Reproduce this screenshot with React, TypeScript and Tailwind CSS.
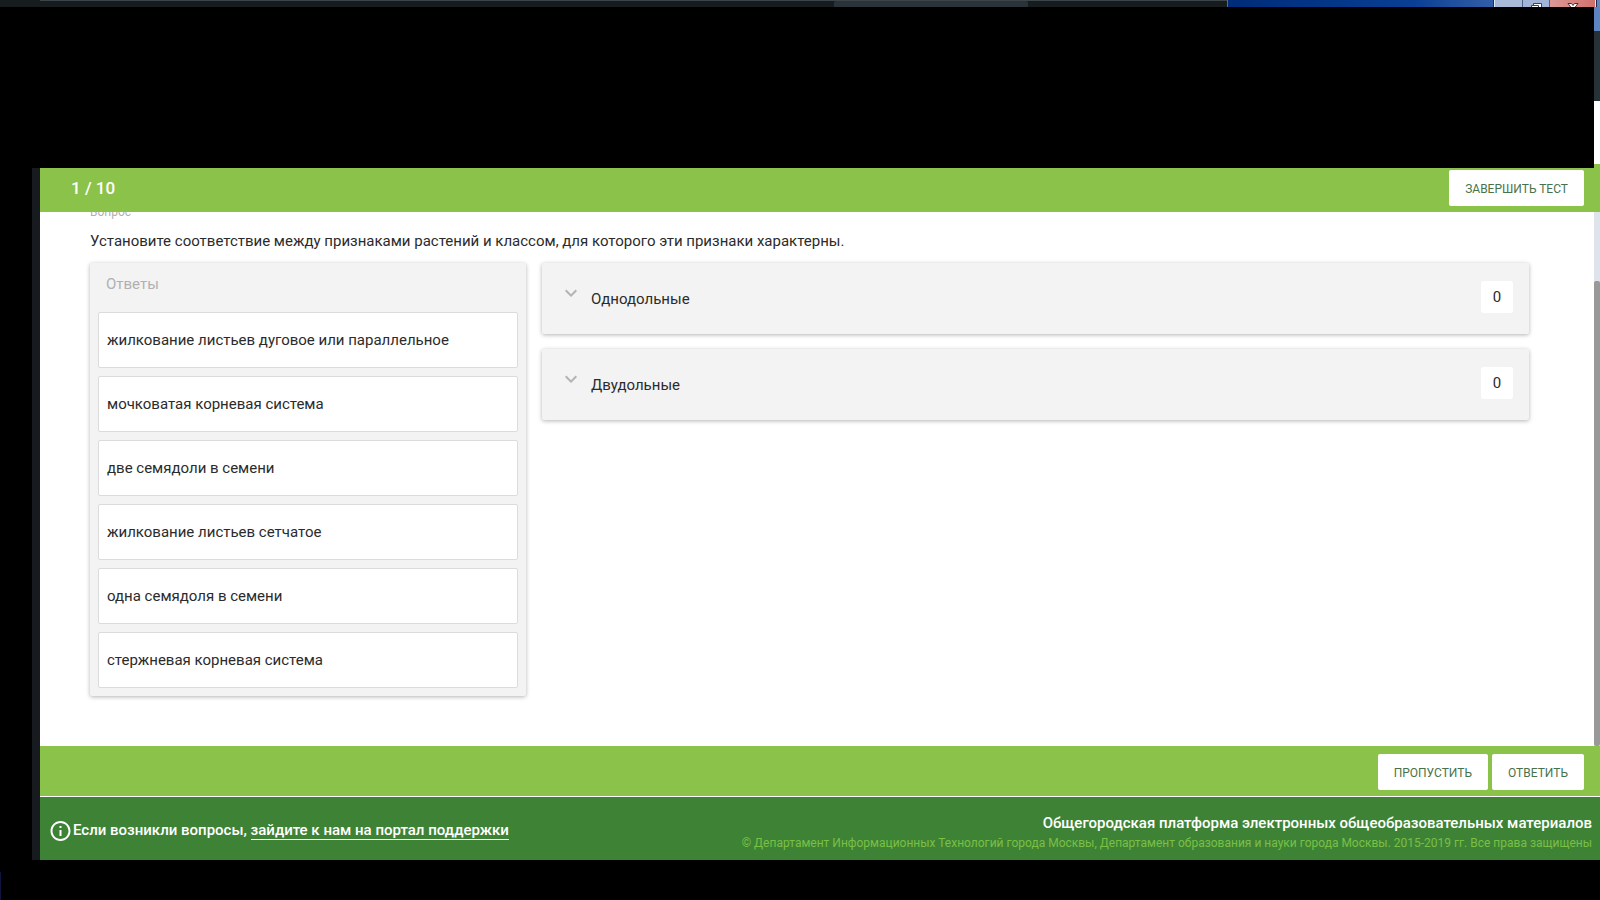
import { useState } from "react";

const answers = [
  "жилкование листьев дуговое или параллельное",
  "мочковатая корневая система",
  "две семядоли в семени",
  "жилкование листьев сетчатое",
  "одна семядоля в семени",
  "стержневая корневая система",
];

const groups = [
  { title: "Однодольные", count: 0 },
  { title: "Двудольные", count: 0 },
];

const buttonClass =
  "flex h-9 items-center rounded-xs bg-white px-4 pt-0.5 text-xs text-[#48734a] uppercase";
const panelClass =
  "rounded-xs bg-[#f3f3f3] shadow-[0_1px_4px_rgba(0,0,0,0.3)]";

function WindowStrip() {
  return (
    <div className="flex h-[7px] overflow-hidden bg-[#171c1f]">
      <div className="w-10" />
      <div className="flex flex-1 border-t border-[#3c4549]">
        <div className="flex-1" />
        <div className="w-[194px] rounded-t-xs bg-[#2a323a]" />
        <div className="w-[199px]" />
      </div>
      <div className="flex w-[373px] border-l border-[#4a70a0] bg-linear-to-r from-[#002c78] via-[#0a3f94] to-[#6288bd]">
        <div className="flex-1" />
        <div className="flex w-[102px] border-x border-[#e4eaf4] outline outline-[#1b2d50]">
          <div className="w-7 border-r border-[#4d6186] bg-[#a9b9d8]" />
          <div className="flex w-[27px] justify-center border-r border-[#4d6186] bg-[#a3b5d6]">
            <svg width="13" height="7" viewBox="0 0 13 7" fill="#fff" stroke="#39435a">
              <path d="M3.5 8V3.5h8V8" />
              <path d="M1.5 8V5.5h7V8" />
            </svg>
          </div>
          <div className="flex flex-1 justify-center bg-linear-to-r from-[#dc9a98] to-[#d0706c]">
            <svg width="12" height="7" viewBox="0 0 12 7" fill="#fff" stroke="#4a2f38">
              <path d="M1 3.5h3.500L6 5.500 7.500 3.500H11L7.500 8h-3z" />
            </svg>
          </div>
        </div>
        <div className="w-1" />
      </div>
    </div>
  );
}

function Chevron({ open }: { open: boolean }) {
  return (
    <svg
      width="24"
      height="24"
      viewBox="0 0 24 24"
      fill="#b3b3b3"
      className={open ? "rotate-180" : ""}
      aria-hidden="true"
    >
      <path d="M16.590 8.590 12 13.170 7.410 8.590 6 10l6 6 6-6z" />
    </svg>
  );
}

function Group({ title, count }: { title: string; count: number }) {
  const [open, setOpen] = useState(false);
  return (
    <section className={panelClass}>
      <button
        type="button"
        aria-expanded={open}
        onClick={() => setOpen(!open)}
        className="flex h-[71px] w-full items-start pt-[18px] pr-4 pl-[17px] text-left"
      >
        <Chevron open={open} />
        <span className="ml-2 flex-1 pt-2 text-[15px] leading-5">{title}</span>
        <span className="flex size-8 items-center justify-center rounded-xs bg-white text-[15px]">
          {count}
        </span>
      </button>
    </section>
  );
}

export default function App() {
  return (
    <div className="flex min-h-screen flex-col bg-black font-['Roboto',sans-serif] text-[#2b2b2b]">
      <WindowStrip />
      <div className="flex h-[161px]">
        <div className="flex-1" />
        <div className="flex w-1.5 flex-col">
          <div className="h-6 bg-[#5b84c0]" />
          <div className="h-[70px] bg-[#263238]" />
          <div className="flex-1 bg-white" />
          <div className="h-1 bg-[#8bc34a]" />
        </div>
      </div>
      <div className="flex flex-1 pl-8">
        <div className="w-2 bg-[#171b1f]" />
        <div className="flex min-w-0 flex-1 flex-col bg-white">
          <header className="flex h-11 items-start justify-between bg-[#8bc34a] pt-0.5 pr-4 pl-[31px]">
            <span className="text-[17px] leading-9 font-medium text-white">1 / 10</span>
            <button type="button" className={buttonClass}>
              Завершить тест
            </button>
          </header>

          <div className="flex flex-1">
            <main className="min-w-0 flex-1 overflow-hidden pr-[65px] pl-[50px]">
              <div className="-mt-2 text-xs leading-4 text-[#b0b0b0]">Вопрос</div>
              <h1 className="mt-[9px] text-[15px] leading-6">
                Установите соответствие между признаками растений и классом, для которого эти
                признаки характерны.
              </h1>
              <div className="mt-2.5 flex items-start gap-4">
                <section className={`${panelClass} w-[436px] shrink-0 px-2 pb-2`}>
                  <h2 className="h-[49px] px-2 pt-[9px] text-[15px] leading-6 text-[#b0b0b0]">
                    Ответы
                  </h2>
                  <ul className="flex flex-col gap-2">
                    {answers.map((a) => (
                      <li
                        key={a}
                        className="flex h-14 cursor-move items-center rounded-xs border border-[#dcdcdc] bg-white px-2 text-[15px]"
                      >
                        {a}
                      </li>
                    ))}
                  </ul>
                </section>
                <div className="flex min-w-0 flex-1 flex-col gap-[15px]">
                  {groups.map((g) => (
                    <Group key={g.title} {...g} />
                  ))}
                </div>
              </div>
            </main>
            <div className="flex w-1.5 flex-col bg-[#dfe3ec] pt-[69px]">
              <div className="flex-1 rounded-xs bg-[#999]" />
            </div>
          </div>

          <div className="flex h-[51px] items-start justify-end gap-1 border-b border-white bg-[#8bc34a] pt-2 pr-4">
            <button type="button" className={buttonClass}>
              Пропустить
            </button>
            <button type="button" className={buttonClass}>
              Ответить
            </button>
          </div>

          <footer className="flex h-[63px] items-center justify-between bg-[#3e8335] px-2 pt-1 text-[15px] font-medium text-white">
            <p className="flex items-center">
              <svg width="25" height="24" viewBox="0 0 24 24" fill="#fff" aria-hidden="true">
                <path d="M11 7h2v2h-2zm0 4h2v6h-2zm1-9C6.480 2 2 6.480 2 12s4.480 10 10 10 10-4.480 10-10S17.520 2 12 2zm0 18c-4.410 0-8-3.590-8-8s3.590-8 8-8 8 3.590 8 8-3.590 8-8 8z" />
              </svg>
              <span>
                Если возникли вопросы,{" "}
                <a href="#support" className="border-b border-white">
                  зайдите к нам на портал поддержки
                </a>
              </span>
            </p>
            <div className="pt-1 text-right">
              <div className="leading-5">
                Общегородская платформа электронных общеобразовательных материалов
              </div>
              <div className="text-xs leading-5 font-normal text-[#7bbf45]">
                © Департамент Информационных Технологий города Москвы, Департамент образования и
                науки города Москвы. 2015-2019 гг. Все права защищены
              </div>
            </div>
          </footer>
        </div>
      </div>
      <div className="flex h-10 items-end">
        <div className="h-7 w-px bg-[#10143c]" />
      </div>
    </div>
  );
}
